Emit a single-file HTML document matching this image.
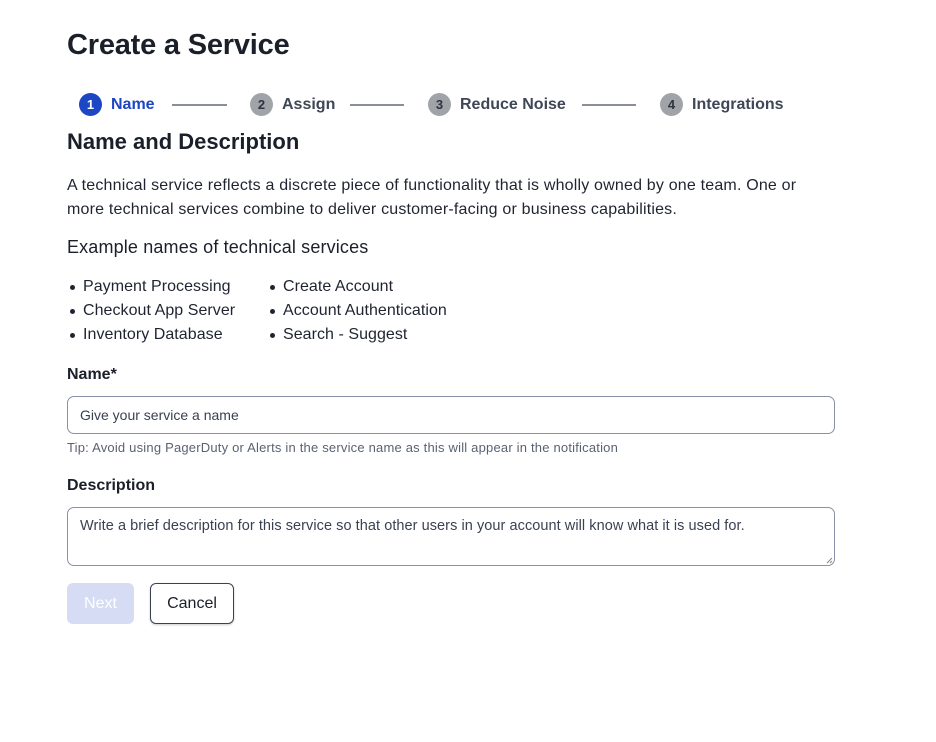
<!DOCTYPE html>
<html><head><meta charset="utf-8"><style>
*{margin:0;padding:0;box-sizing:border-box}
body{width:936px;height:742px;background:#fff;font-family:"Liberation Sans",sans-serif;color:#1b1f2a;position:relative;overflow:hidden}
.a{position:absolute;white-space:nowrap}
h1{position:absolute;left:67px;top:29px;font-size:29px;font-weight:700;letter-spacing:-0.2px;color:#1b1f2a}
.c{position:absolute;top:93px;width:23px;height:23px;border-radius:50%;background:#a0a4a8;color:#2c3340;font-size:13px;font-weight:700;text-align:center;line-height:23px}
.s{position:absolute;top:95px;font-size:16px;font-weight:700;color:#3f4656;line-height:20px}
.l{position:absolute;top:104px;height:1.5px;background:#8a8f97}
.p{font-size:16px;color:#1f2430;line-height:24px;letter-spacing:0.19px}
.b{position:absolute;font-size:16px;line-height:24px;color:#1f2430;letter-spacing:0.05px}
.b:before{content:"";position:absolute;left:-13px;top:10px;width:5px;height:5px;border-radius:50%;background:#1f2430}
.box{position:absolute;left:67px;width:768px;border:1px solid #8792a8;border-radius:7px;font-size:14px;color:#3a4152;padding-left:12px}
</style></head><body>
<h1>Create a Service</h1>
<div class="c" style="left:79px;background:#1d46c4;color:#fff">1</div>
<div class="s" style="left:111px;color:#1d46c4">Name</div>
<div class="l" style="left:172px;width:55px"></div>
<div class="c" style="left:250px">2</div>
<div class="s" style="left:282px">Assign</div>
<div class="l" style="left:350px;width:54px"></div>
<div class="c" style="left:428px">3</div>
<div class="s" style="left:460px">Reduce Noise</div>
<div class="l" style="left:582px;width:54px"></div>
<div class="c" style="left:660px">4</div>
<div class="s" style="left:692px">Integrations</div>
<div class="a" style="left:67px;top:129px;font-size:22px;font-weight:700">Name and Description</div>
<div class="a p" style="left:67px;top:174px">A technical service reflects a discrete piece of functionality that is wholly owned by one team. One or<br>more technical services combine to deliver customer-facing or business capabilities.</div>
<div class="a" style="left:67px;top:237px;font-size:18px;letter-spacing:0.15px">Example names of technical services</div>
<div class="b" style="left:83px;top:275px">Payment Processing</div>
<div class="b" style="left:83px;top:299px">Checkout App Server</div>
<div class="b" style="left:83px;top:323px">Inventory Database</div>
<div class="b" style="left:283px;top:275px">Create Account</div>
<div class="b" style="left:283px;top:299px">Account Authentication</div>
<div class="b" style="left:283px;top:323px">Search - Suggest</div>
<div class="a" style="left:67px;top:366px;font-size:16px;font-weight:700">Name*</div>
<div class="box" style="top:396px;height:38px;line-height:36px">Give your service a name</div>
<div class="a" style="left:67px;top:440px;font-size:13px;letter-spacing:0.2px;color:#5a6272">Tip: Avoid using PagerDuty or Alerts in the service name as this will appear in the notification</div>
<div class="a" style="left:67px;top:477px;font-size:16px;font-weight:700">Description</div>
<div class="box" style="top:507px;height:59px;padding-top:10px;font-size:14.5px;letter-spacing:0.06px">Write a brief description for this service so that other users in your account will know what it is used for.
<svg style="position:absolute;right:1px;bottom:1px" width="7" height="7"><path d="M6 1L1 6M6 4L4 6" stroke="#888" stroke-width="1"/></svg></div>
<div class="a" style="left:67px;top:583px;width:67px;height:41px;border-radius:6px;background:#d5dcf3;color:#fff;font-size:16px;text-align:center;line-height:41px">Next</div>
<div class="a" style="left:150px;top:583px;width:84px;height:41px;border-radius:6px;border:1px solid #3a4152;color:#1b1f2a;font-size:16px;text-align:center;line-height:39px;box-shadow:0 1px 2px rgba(0,0,0,.2)">Cancel</div>
</body></html>
